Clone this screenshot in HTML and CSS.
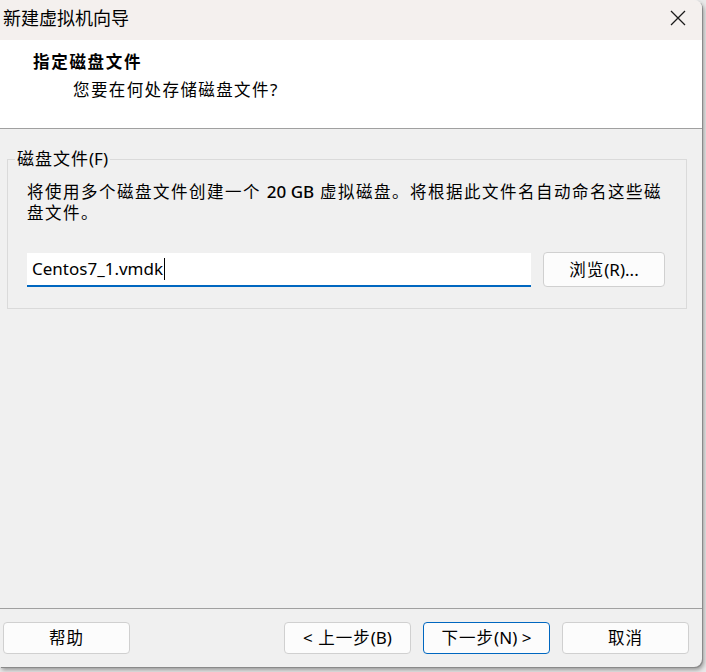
FILE: index.html
```html
<!DOCTYPE html>
<html lang="zh-CN">
<head>
<meta charset="utf-8">
<title>新建虚拟机向导</title>
<link rel="stylesheet" href="styles.css">
</head>
<body>
<div class="window">
  <div class="titlebar">
    <span class="title">新建虚拟机向导</span>
    <svg class="close" width="16" height="16" viewBox="0 0 16 16"><path d="M1 1 L15 15 M15 1 L1 15" stroke="#1a1a1a" stroke-width="1.3" fill="none"/></svg>
  </div>
  <div class="header">
    <div class="h-title">指定磁盘文件</div>
    <div class="h-sub">您要在何处存储磁盘文件<span class="lat">?</span></div>
  </div>
  <div class="content">
    <fieldset class="group">
      <legend>磁盘文件<span class="lat">(F)</span></legend>
      <p class="desc">将使用多个磁盘文件创建一个 <span class="lat">20 GB</span> 虚拟磁盘。将根据此文件名自动命名这些磁盘文件。</p>
      <div class="row">
        <div class="input">Centos7_1.vmdk<span class="caret"></span></div>
        <button class="btn browse">浏览<span class="lat">(R)...</span></button>
      </div>
    </fieldset>
  </div>
  <div class="footer">
    <button class="btn">帮助</button>
    <div class="spacer"></div>
    <button class="btn"><span class="lat">&lt;</span> 上一步<span class="lat">(B)</span></button>
    <button class="btn primary">下一步<span class="lat">(N) &gt;</span></button>
    <button class="btn">取消</button>
  </div>
</div>
</body>
</html>
```

FILE: styles.css
```css
* { box-sizing: border-box; }
html, body { margin: 0; padding: 0; }
body {
  width: 706px;
  height: 672px;
  background: #e9e9e9;
  font-family: "Noto Sans", "Noto Sans CJK SC", sans-serif;
  color: #000;
  overflow: hidden;
}
.window {
  width: 702px;
  height: 667px;
  background: #f0f0f0;
  border-radius: 0 8px 8px 0;
  display: flex;
  flex-direction: column;
  overflow: hidden;
  box-shadow: 1px 1px 0 #8a8a8a, 2px 3px 4px rgba(0,0,0,0.35);
}
.titlebar {
  height: 40px;
  background: #f4f0ee;
  display: flex;
  align-items: center;
  justify-content: space-between;
  padding: 0 16px 0 3px;
  flex: none;
}
.title {
  font-size: 18px;
  line-height: 20px;
  margin-top: -4px;
}
.close { margin-top: -5px; }
.header {
  height: 89px;
  background: #fff;
  border-bottom: 1px solid #a0a0a0;
  padding: 12px 0 0 0;
  flex: none;
}
.h-title {
  font-size: 16.5px;
  font-weight: bold;
  letter-spacing: 1.7px;
  line-height: 20px;
  margin-left: 33px;
}
.h-sub {
  font-size: 16.5px;
  letter-spacing: 1.4px;
  line-height: 20px;
  margin: 8px 0 0 73px;
}
.lat {
  letter-spacing: 0;
  font-size: 17px;
}
.content {
  flex: 1;
  padding: 20px 15px 0 7px;
}
.group {
  margin: 0;
  border: 1px solid #dadada;
  padding: 0 15px 21px 19px;
  min-width: 0;
}
.group legend {
  font-size: 17px;
  letter-spacing: 1px;
  line-height: 20px;
  padding: 0 2px;
  margin-left: -12px;
}
.desc {
  margin: 12px 0 0;
  font-size: 16.5px;
  letter-spacing: 1.5px;
  line-height: 21px;
}
.desc .lat { font-weight: 500; }
.row {
  display: flex;
  align-items: flex-start;
  gap: 12px;
  margin-top: 30px;
}
.input {
  width: 504px;
  height: 34px;
  background: #fff;
  border-bottom: 2px solid #0067c0;
  padding: 0 0 0 5px;
  font-size: 17px;
  line-height: 32px;
  display: flex;
  align-items: center;
}
.caret {
  display: inline-block;
  width: 1px;
  height: 22px;
  background: #000;
  margin-left: 1px;
}
.btn {
  font-family: inherit;
  font-size: 16.5px;
  letter-spacing: 1px;
  color: #000;
  background: #fcfcfc;
  border: 1px solid #d0d0d0;
  border-radius: 4px;
  width: 127px;
  height: 32px;
  padding: 0;
  line-height: 30px;
}
.browse {
  width: 122px;
  height: 35px;
  margin-top: -1px;
}
.primary {
  border-color: #0067c0;
}
.footer {
  flex: none;
  height: 59px;
  border-top: 1px solid #a0a0a0;
  display: flex;
  align-items: flex-start;
  gap: 12px;
  padding: 13px 13px 0 3px;
}
.spacer { flex: 1; }
```
